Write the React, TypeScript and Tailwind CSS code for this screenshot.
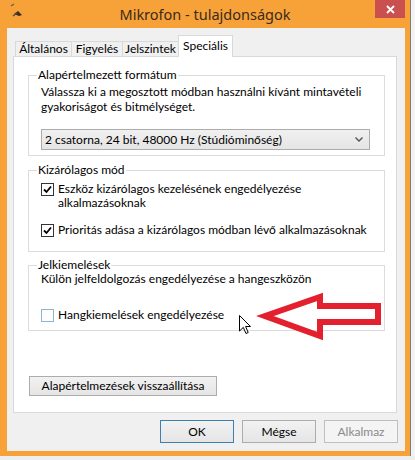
import { ReactNode } from 'react';

const tabs = ['Általános', 'Figyelés', 'Jelszintek', 'Speciális'];
const tabWidths = ['w-[57px]', 'w-[52px]', 'w-[57px]', 'w-[55px]'];

const CheckBox = ({ checked }: { checked: boolean }) =>
  checked ? (
    <span className="mt-[1px] flex h-[13px] w-[13px] shrink-0 items-center justify-center border border-[#333333] bg-white">
      <svg width="9" height="9" viewBox="0 0 9 9">
        <path d="M1 4.5 L3.5 7 L8 1.5" fill="none" stroke="#000" strokeWidth="1.8" />
      </svg>
    </span>
  ) : (
    <span className="mt-[1px] h-[13px] w-[13px] shrink-0 border border-[#8fb4cc] bg-[#fbfdfe]" />
  );

const Group = ({ title, className, children }: { title: string; className?: string; children: ReactNode }) => (
  <fieldset className={`border border-[#dcdcdc] ${className ?? ''}`}>
    <legend className="ml-[8px] px-[1px] leading-[16px]">{title}</legend>
    <div className="px-[12px]">{children}</div>
  </fieldset>
);

const Option = ({ checked, children }: { checked: boolean; children: ReactNode }) => (
  <label className="flex items-start gap-[4px] leading-[14px]">
    <CheckBox checked={checked} />
    <span>{children}</span>
  </label>
);

const DialogButton = ({ label, variant }: { label: string; variant?: 'default' | 'disabled' }) => (
  <button
    className={`h-[23px] w-[74px] border text-[12px] ${
      variant === 'default'
        ? 'border-[#3c7fb1] bg-gradient-to-b from-[#f2f2f2] to-[#e5e5e5] text-black'
        : variant === 'disabled'
          ? 'border-[#bfbfbf] bg-[#f4f4f4] text-[#8a8a8a]'
          : 'border-[#acacac] bg-gradient-to-b from-[#f2f2f2] to-[#e5e5e5] text-black'
    }`}
  >
    {label}
  </button>
);

const App = () => {
  return (
    <div className="relative flex h-[460px] w-[415px] flex-col overflow-hidden bg-[#eef0f2] font-['Lato',sans-serif] text-[12px] text-black">
      <div className="flex">
        <div className="flex h-[456px] w-[410px] flex-col bg-[#f7a238]">
          <div className="grid h-[28px] grid-cols-[1fr_auto_1fr]">
            <div className="pl-[9px] pt-[3px]">
              <svg width="16" height="16" viewBox="0 0 16 16">
                <path d="M2 3 L5 1" stroke="#6b5a48" strokeWidth="1.2" />
                <path d="M5 11 L9 8 L13 12 L10 13 Z" fill="#3b2f25" />
                <path d="M4 13 L8 10" stroke="#5a4a3a" strokeWidth="1.5" />
              </svg>
            </div>
            <div className="pt-[4px] font-['Noto_Sans',sans-serif] text-[14.5px] leading-[20px] text-[#3b2a1c]">
              Mikrofon - tulajdonságok
            </div>
            <div className="flex justify-end pr-[5px]">
              <div className="flex h-[18px] w-[30px] items-center justify-center bg-[#c9504e]">
                <svg width="9" height="9" viewBox="0 0 9 9">
                  <path d="M1 1 L8 8 M8 1 L1 8" stroke="#fff" strokeWidth="1.8" />
                </svg>
              </div>
            </div>
          </div>

          <div className="ml-[7px] mr-[5px] flex h-[423px] flex-col bg-[#f0f0f0] pt-[7px]">
            <div className="flex h-[21px] items-end pl-[8px]">
              {tabs.map((t, i) => {
                const active = t === 'Speciális';
                return (
                  <div
                    key={t}
                    className={`${tabWidths[i]} ${i > 0 ? '-ml-px' : ''} flex justify-center border border-b-0 ${
                      active
                        ? 'relative z-10 -mb-px h-[22px] border-[#d9d9d9] bg-white pt-[2px] leading-[16px]'
                        : 'h-[15px] border-[#d9d9d9] bg-[#f0f0f0] leading-[14px]'
                    }`}
                  >
                    {t}
                  </div>
                );
              })}
            </div>

            <div className="ml-[6px] mr-[8px] flex h-[357px] flex-col border border-[#d9d9d9] bg-white pl-[14px] pr-[11px] pt-[10px]">
              <Group title="Alapértelmezett formátum" className="pb-[5px]">
                <p className="mt-[1px] leading-[15px]">
                  Válassza ki a megosztott módban használni kívánt mintavételi
                  <br />
                  gyakoriságot és bitmélységet.
                </p>
                <div className="mt-[15px] mr-[2px] flex h-[21px] items-center justify-between border border-[#acacac] bg-gradient-to-b from-[#f0f0f0] to-[#e5e5e5] pl-[3px] pr-[6px]">
                  <span>2 csatorna, 24 bit, 48000 Hz (Stúdióminőség)</span>
                  <svg width="8" height="5" viewBox="0 0 8 5">
                    <path d="M0.5 0.5 L4 4 L7.5 0.5" fill="none" stroke="#505050" strokeWidth="1.3" />
                  </svg>
                </div>
              </Group>

              <Group title="Kizárólagos mód" className="mt-[6px] pb-[14px]">
                <div className="mt-[4px] flex flex-col gap-[13px]">
                  <Option checked>
                    Eszköz kizárólagos kezelésének engedélyezése
                    <br />
                    alkalmazásoknak
                  </Option>
                  <Option checked>Prioritás adása a kizárólagos módban lévő alkalmazásoknak</Option>
                </div>
              </Group>

              <Group title="Jelkiemelések" className="mt-[5px] pb-[8px]">
                <p className="mt-[-1px] leading-[14px]">Külön jelfeldolgozás engedélyezése a hangeszközön</p>
                <div className="mt-[22px]">
                  <Option checked={false}>Hangkiemelések engedélyezése</Option>
                </div>
              </Group>

              <div className="mt-[45px] pl-[1px]">
                <button className="h-[20px] w-[188px] border border-[#acacac] bg-gradient-to-b from-[#f2f2f2] to-[#e5e5e5] text-[12px]">
                  Alapértelmezések visszaállítása
                </button>
              </div>
            </div>

            <div className="mt-[7px] flex justify-end gap-[8px] pr-[7px]">
              <DialogButton label="OK" variant="default" />
              <DialogButton label="Mégse" />
              <DialogButton label="Alkalmaz" variant="disabled" />
            </div>
          </div>
        </div>
        <div className="flex-1 border-l border-[#7d7d7d] bg-[#f3f3f3]" />
      </div>
      <div className="h-[4px] bg-[#eceef0]" />

      <svg className="absolute left-[255px] top-[288px]" width="130" height="57" viewBox="255 288 130 57">
        <path
          d="M265 316 L320 297 L320 306 L378 306 L378 322 L320 322 L320 336 Z"
          fill="none"
          stroke="#e3202d"
          strokeWidth="6"
          strokeLinejoin="miter"
        />
      </svg>
      <svg className="absolute left-[239px] top-[315px]" width="13" height="20" viewBox="0 0 13 20">
        <path d="M0.5 0.5 L0.5 16 L4.3 12.4 L7 18.5 L9.2 17.5 L6.6 11.5 L11.5 11.5 Z" fill="#fff" stroke="#000" strokeWidth="1" />
      </svg>
    </div>
  );
};

export default App;
